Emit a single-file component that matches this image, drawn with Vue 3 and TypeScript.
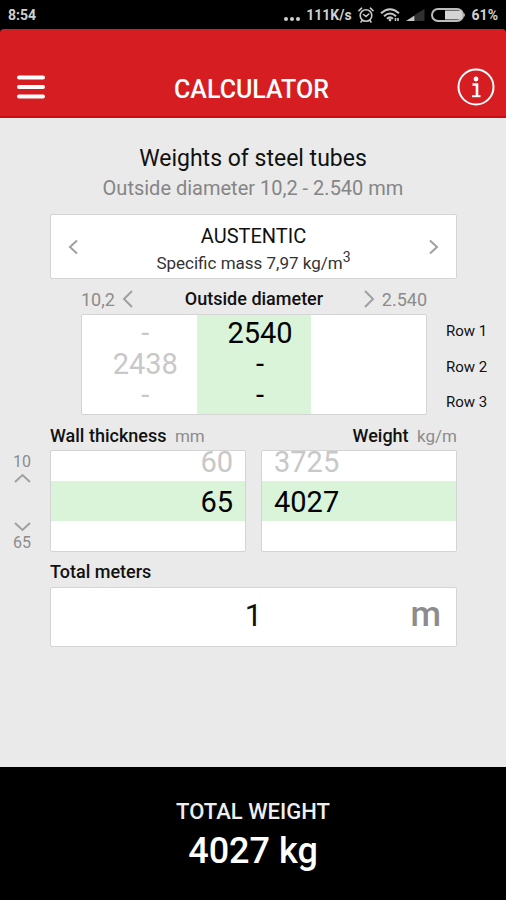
<script setup lang="ts">
import { computed, ref } from 'vue'

interface WallOption {
  thickness: number
  weight: number
}

const rowLabels = ['Row 1', 'Row 2', 'Row 3']

const diameters: string[][] = [
  ['-', '2438', '-'],
  ['2540', '-', '-'],
  [],
]
const activeDiameter = ref(1)

const walls: WallOption[] = [
  { thickness: 60, weight: 3725 },
  { thickness: 65, weight: 4027 },
]
const activeWall = ref(1)

const meters = ref('1')
const totalWeight = computed(() => Math.round(walls[activeWall.value].weight * (Number(meters.value) || 0)))
</script>

<template>
  <div class="screen">
    <div class="status">
      <span>8:54</span>
      <div class="status-right">
        <svg width="16" height="14" viewBox="0 0 16 14" fill="#d0d0d0">
          <circle cx="2" cy="11" r="2" /><circle cx="8" cy="11" r="2" /><circle cx="14" cy="11" r="2" />
        </svg>
        <span>111K/s</span>
        <svg width="16" height="16" viewBox="0 0 16 16" fill="none" stroke="#c8c8c8" stroke-width="1.6" stroke-linecap="round">
          <circle cx="8" cy="8.5" r="5.8" />
          <path d="M5.5 7.5 8 9.5l2.8-2.5M1 3.6 3.6 1.2M15 3.6 12.4 1.2M4 13.5 3 15M12 13.5l1 1.5" />
        </svg>
        <svg width="20" height="16" viewBox="0 0 20 16" fill="none" stroke="#c8c8c8" stroke-width="2">
          <path d="M1 6.2Q10-1.8 19 6.2M4 9.2Q10 3.8 16 9.2M7 11.8Q10 9 13 11.8" />
          <circle cx="10" cy="13" r="1.4" fill="#c8c8c8" stroke="none" />
          <path d="M15.5 11v3M18 11v3" stroke-width="1.6" />
        </svg>
        <svg width="19" height="14" viewBox="0 0 19 14">
          <path d="M9 6.5 18.5 1v12H9z" fill="#303030" />
          <path d="M0 13 8.5 7.5V13z" fill="#c8c8c8" />
        </svg>
        <svg width="35" height="14" viewBox="0 0 35 14">
          <rect x="1" y="1" width="31" height="12" rx="6" fill="none" stroke="#bdbdbd" stroke-width="2" />
          <path d="M14 2.5h14a3 3 0 0 1 3 3v3a3 3 0 0 1-3 3H14z" fill="#d4d4d4" />
          <path d="M32.5 4.5q3 2.5 0 5z" fill="#bdbdbd" />
        </svg>
        <span>61%</span>
      </div>
    </div>

    <header class="header">
      <button class="icon-button" type="button" aria-label="Menu">
        <svg width="30" height="26" viewBox="0 0 30 26" fill="none" stroke="#fff" stroke-width="4" stroke-linecap="round">
          <path d="M3 3.5h24M3 13h24M3 22.5h24" />
        </svg>
      </button>
      <h1>CALCULATOR</h1>
      <button class="icon-button" type="button" aria-label="Information">
        <svg width="38" height="38" viewBox="0 0 38 38" fill="none" stroke="#fff" stroke-width="2">
          <circle cx="19" cy="19" r="17.5" />
          <circle cx="19" cy="11" r="2.4" fill="#fff" stroke="none" />
          <path d="M15.5 16.5h4.5v11.5" stroke-width="2.6" />
          <path d="M15 28.2h8.5" />
        </svg>
      </button>
    </header>

    <main class="content">
      <div class="intro">
        <h2>Weights of steel tubes</h2>
        <p>Outside diameter 10,2 - 2.540 mm</p>
      </div>

      <section class="material box">
        <button type="button" aria-label="Previous material">
          <svg width="10" height="16" viewBox="0 0 10 16"><path d="M9 1.5 2 8l7 6.5" /></svg>
        </button>
        <div class="material-text">
          <strong>AUSTENTIC</strong>
          <span>Specific mass 7,97 kg/m<sup>3</sup></span>
        </div>
        <button type="button" aria-label="Next material">
          <svg width="10" height="16" viewBox="0 0 10 16"><path d="M1 1.5 8 8l-7 6.5" /></svg>
        </button>
      </section>

      <section class="diameter">
        <div class="diameter-head">
          <button type="button" aria-label="Smaller diameter, from 10,2" @click="activeDiameter = 0">
            10,2
            <svg width="11" height="18" viewBox="0 0 11 18"><path d="M10 1 2 9l8 8" /></svg>
          </button>
          <h3>Outside diameter</h3>
          <button type="button" aria-label="Larger diameter, up to 2.540" @click="activeDiameter = 1">
            <svg width="11" height="18" viewBox="0 0 11 18"><path d="M1 1l8 8-8 8" /></svg>
            2.540
          </button>
        </div>
        <div class="diameter-box box">
          <button
            v-for="(column, index) in diameters"
            :key="index"
            type="button"
            class="value column"
            :class="{ active: index === activeDiameter }"
            :disabled="!column.length"
            @click="activeDiameter = index"
          >
            <span v-for="(item, row) in column" :key="row">{{ item }}</span>
          </button>
        </div>
        <ul class="row-labels">
          <li v-for="label in rowLabels" :key="label">{{ label }}</li>
        </ul>
      </section>

      <section class="wall">
        <div class="scale">
          <button type="button" aria-label="Thinner wall, from 10" @click="activeWall = 0">
            10
            <svg width="17" height="10" viewBox="0 0 17 10"><path d="M1 9l7.5-7L16 9" /></svg>
          </button>
          <button type="button" aria-label="Thicker wall, up to 65" @click="activeWall = 1">
            <svg width="17" height="10" viewBox="0 0 17 10"><path d="M1 1l7.5 7L16 1" /></svg>
            65
          </button>
        </div>
        <div class="picker">
          <h3>Wall thickness <small>mm</small></h3>
          <div class="picker-box box right">
            <button
              v-for="(wall, index) in walls"
              :key="wall.thickness"
              type="button"
              class="value"
              :class="{ active: index === activeWall }"
              @click="activeWall = index"
            >{{ wall.thickness }}</button>
          </div>
        </div>
        <div class="picker">
          <h3 class="end">Weight <small>kg/m</small></h3>
          <div class="picker-box box">
            <button
              v-for="(wall, index) in walls"
              :key="wall.weight"
              type="button"
              class="value"
              :class="{ active: index === activeWall }"
              @click="activeWall = index"
            >{{ wall.weight }}</button>
          </div>
        </div>
      </section>

      <section class="meters">
        <label for="meters">Total meters</label>
        <div class="meters-box box">
          <input id="meters" v-model="meters" type="text" inputmode="decimal" />
          <span>m</span>
        </div>
      </section>
    </main>

    <footer class="total">
      <span>TOTAL WEIGHT</span>
      <output for="meters">{{ totalWeight }} kg</output>
    </footer>
  </div>
</template>

<style>
body {
  margin: 0;
}
</style>

<style scoped>
.screen {
  display: flex;
  flex-direction: column;
  min-height: 100vh;
  background: #000;
  color: #111;
  font-family: Roboto, "Liberation Sans", sans-serif;
}

.screen * {
  box-sizing: border-box;
}

h1,
h2,
h3,
p,
ul {
  margin: 0;
  padding: 0;
}

button {
  padding: 0;
  border: 0;
  background: none;
  color: inherit;
  font: inherit;
  cursor: pointer;
}

svg {
  flex: none;
}

.box {
  border: 1px solid #d4d4d4;
  border-radius: 2px;
  background: #fff;
}

.status {
  display: flex;
  align-items: center;
  justify-content: space-between;
  height: 29px;
  padding: 0 8px;
  color: #d0d0d0;
  font-size: 14px;
  font-weight: 700;
}

.status-right {
  display: flex;
  align-items: center;
  gap: 6px;
}

.header {
  display: flex;
  align-items: center;
  justify-content: space-between;
  height: 89px;
  padding: 29px 11px 0 16px;
  border-bottom: 2px solid #c80c12;
  border-radius: 4px 4px 0 0;
  background: #d51d22;
  color: #fff;
}

.header h1 {
  padding-top: 5px;
  font-size: 25px;
  font-weight: 500;
  line-height: 32px;
}

.icon-button {
  display: flex;
}

.content {
  flex: 1;
  padding: 25px 0 24px;
  background: #eaeaea;
}

.intro {
  text-align: center;
}

.intro h2 {
  font-size: 23px;
  font-weight: 400;
  line-height: 32px;
}

.intro p {
  color: #858585;
  font-size: 20px;
  line-height: 26px;
}

.material {
  display: flex;
  align-items: center;
  justify-content: space-between;
  height: 65px;
  margin: 13px 49px 0 50px;
  padding: 0 17px;
}

.material button,
.diameter-head button,
.scale button {
  display: flex;
  align-items: center;
}

.material path,
.diameter path,
.scale path {
  fill: none;
  stroke: #a0a0a0;
  stroke-width: 2;
}

.material-text {
  display: flex;
  flex-direction: column;
  align-items: center;
  padding-top: 4px;
}

.material-text strong {
  font-size: 20px;
  font-weight: 400;
  line-height: 28px;
}

.material-text span {
  color: #333;
  font-size: 17px;
  line-height: 26px;
}

.material-text sup {
  font-size: 14px;
  line-height: 0;
}

.diameter {
  display: grid;
  grid-template-columns: 1fr 60px;
  column-gap: 19px;
  padding-left: 81px;
}

.diameter-head {
  display: grid;
  grid-template-columns: 1fr auto 1fr;
  align-items: center;
  grid-column: 1;
  height: 35px;
  padding-top: 5px;
}

.diameter-head button {
  gap: 7px;
  color: #8c8c8c;
  font-size: 18px;
}

.diameter-head button:last-child {
  justify-self: end;
}

h3,
.meters label {
  font-size: 18px;
  font-weight: 500;
  line-height: 24px;
}

h3 small {
  margin-left: 4px;
  color: #8c8c8c;
  font-size: 17px;
  font-weight: 400;
}

.diameter-box {
  display: grid;
  grid-template-columns: repeat(3, 1fr);
  grid-column: 1;
  height: 101px;
}

.value {
  color: #c8c8c8;
  font-size: 29px;
}

.value.active {
  background: #d9f4d9;
  color: #000;
}

.column {
  display: flex;
  flex-direction: column;
  align-items: center;
  padding: 3px 0 0 12px;
  line-height: 31px;
}

.row-labels {
  display: flex;
  flex-direction: column;
  justify-content: space-between;
  grid-column: 2;
  padding: 6px 0 2px;
  font-size: 15px;
  line-height: 22px;
  list-style: none;
}

.wall {
  display: grid;
  grid-template-columns: 35px 1fr 1fr;
  column-gap: 15px;
  margin-top: 9px;
  padding-right: 49px;
}

.scale {
  display: flex;
  flex-direction: column;
  justify-content: space-between;
  padding: 29px 0 0 9px;
  color: #8c8c8c;
  font-size: 16px;
  line-height: 18px;
}

.scale button {
  flex-direction: column;
  gap: 2px;
}

.end {
  text-align: right;
}

.picker-box {
  display: flex;
  flex-direction: column;
  height: 102px;
  margin-top: 2px;
  overflow: hidden;
}

.picker-box .value {
  flex: none;
  height: 40px;
  padding: 2px 12px 0;
  line-height: 38px;
  text-align: left;
}

.picker-box .value:first-child {
  margin-top: -10px;
}

.picker-box.right .value {
  text-align: right;
}

.meters {
  margin: 8px 49px 0 50px;
}

.meters label {
  display: block;
}

.meters-box {
  display: grid;
  grid-template-columns: 1fr auto 1fr;
  align-items: center;
  height: 60px;
  margin-top: 3px;
  padding: 0 15px 4px;
}

.meters-box input {
  grid-column: 2;
  width: 120px;
  padding: 0;
  border: 0;
  outline: 0;
  background: none;
  color: #111;
  font: inherit;
  font-size: 31px;
  text-align: center;
}

.meters-box span {
  justify-self: end;
  color: #8c8c8c;
  font-size: 35px;
  font-weight: 500;
  line-height: 40px;
}

.total {
  display: flex;
  flex-direction: column;
  align-items: center;
  height: 133px;
  padding-top: 29px;
  color: #fff;
}

.total span {
  color: #eee;
  font-size: 22px;
  font-weight: 500;
  line-height: 32px;
}

.total output {
  font-size: 36px;
  font-weight: 500;
  line-height: 46px;
}
</style>
